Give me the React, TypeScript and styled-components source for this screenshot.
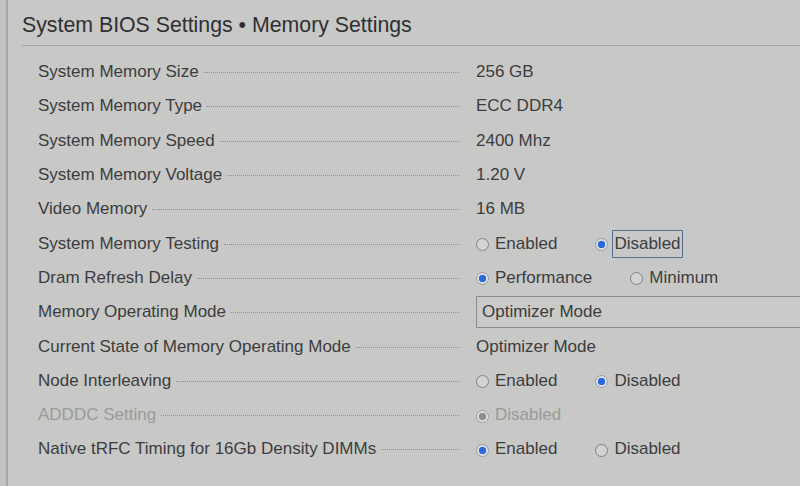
import React from "react";
import styled, { createGlobalStyle } from "styled-components";

const Global = createGlobalStyle`
  html, body { margin: 0; padding: 0; background: #c7c7c5; }
  body { font-family: "Liberation Sans", Arial, sans-serif; overflow: hidden; }
`;

const Screen = styled.div`
  width: 800px;
  height: 486px;
  display: flex;
  background: #c8c8c6;
  overflow: hidden;
`;

const Strip = styled.div`
  width: 6px;
  flex: none;
  background: #c2c2c0;
  border-right: 2px solid #a7a8a6;
`;

const Main = styled.div`
  flex: 1;
  display: flex;
  flex-direction: column;
  min-width: 0;
`;

const Title = styled.h1`
  margin: 0 0 0 14px;
  height: 46px;
  box-sizing: border-box;
  padding-top: 13px;
  font-size: 21.3px;
  font-weight: normal;
  color: #2f3033;
  border-bottom: 1px solid #a6a6a4;
`;

const List = styled.div`
  display: flex;
  flex-direction: column;
  padding: 9px 0 0 30px;
`;

const Row = styled.div<{ $disabled?: boolean }>`
  display: grid;
  grid-template-columns: 422px 1fr;
  column-gap: 16px;
  align-items: center;
  height: 34.3px;
  font-size: 17px;
  color: ${(p) => (p.$disabled ? "#9a9b9b" : "#3c3d3f")};
`;

const LabelCell = styled.div`
  display: flex;
  align-items: baseline;
  min-width: 0;
`;

const LabelText = styled.span`
  white-space: nowrap;
`;

const Leader = styled.span`
  flex: 1;
  margin-left: 5px;
  border-bottom: 1px dotted #8f908f;
  transform: translateY(-4px);
`;

const Value = styled.div`
  white-space: nowrap;
`;

const Options = styled.div`
  display: flex;
  gap: 36px;
  align-items: center;
`;

const Option = styled.span`
  display: inline-flex;
  align-items: center;
  gap: 4px;
`;

const Dot = styled.span<{ $on?: boolean; $dim?: boolean }>`
  width: 13px;
  height: 13px;
  box-sizing: border-box;
  border-radius: 50%;
  border: 1px solid ${(p) => (p.$on ? "#9aa0aa" : "#7e8288")};
  background: ${(p) =>
    p.$on
      ? `radial-gradient(circle, ${p.$dim ? "#8b8c8e" : "#2a6ad8"} 0 3.4px, #dcdde0 4px)`
      : "#d2d3d3"};
  margin-top: 2px;
  flex: none;
`;

const OptText = styled.span<{ $focus?: boolean }>`
  padding: ${(p) => (p.$focus ? "4px 1px" : "5px 2px")};
  border: ${(p) => (p.$focus ? "1px solid #58708f" : "0")};
  line-height: 18px;
`;

const Select = styled.div`
  height: 32px;
  box-sizing: border-box;
  border: 1px solid #8b8c8c;
  border-right: none;
  margin-right: -20px;
  padding-left: 5px;
  display: flex;
  align-items: center;
  background: #cacac8;
`;

type Opt = { label: string; on?: boolean; focus?: boolean };
type Item =
  | { label: string; kind: "text"; value: string; disabled?: boolean }
  | { label: string; kind: "radio"; options: Opt[]; disabled?: boolean }
  | { label: string; kind: "select"; value: string; disabled?: boolean };

const items: Item[] = [
  { label: "System Memory Size", kind: "text", value: "256 GB" },
  { label: "System Memory Type", kind: "text", value: "ECC DDR4" },
  { label: "System Memory Speed", kind: "text", value: "2400 Mhz" },
  { label: "System Memory Voltage", kind: "text", value: "1.20 V" },
  { label: "Video Memory", kind: "text", value: "16 MB" },
  {
    label: "System Memory Testing",
    kind: "radio",
    options: [{ label: "Enabled" }, { label: "Disabled", on: true, focus: true }],
  },
  {
    label: "Dram Refresh Delay",
    kind: "radio",
    options: [{ label: "Performance", on: true }, { label: "Minimum" }],
  },
  { label: "Memory Operating Mode", kind: "select", value: "Optimizer Mode" },
  { label: "Current State of Memory Operating Mode", kind: "text", value: "Optimizer Mode" },
  {
    label: "Node Interleaving",
    kind: "radio",
    options: [{ label: "Enabled" }, { label: "Disabled", on: true }],
  },
  {
    label: "ADDDC Setting",
    kind: "radio",
    disabled: true,
    options: [{ label: "Disabled", on: true }],
  },
  {
    label: "Native tRFC Timing for 16Gb Density DIMMs",
    kind: "radio",
    options: [{ label: "Enabled", on: true }, { label: "Disabled" }],
  },
];

function renderValue(it: Item) {
  if (it.kind === "text") return <Value>{it.value}</Value>;
  if (it.kind === "select") return <Select>{it.value}</Select>;
  return (
    <Options>
      {it.options.map((o) => (
        <Option key={o.label}>
          <Dot $on={o.on} $dim={it.disabled} />
          <OptText $focus={o.focus}>{o.label}</OptText>
        </Option>
      ))}
    </Options>
  );
}

export default function App() {
  return (
    <>
      <Global />
      <Screen>
        <Strip />
        <Main>
          <Title>System BIOS Settings • Memory Settings</Title>
          <List>
            {items.map((it) => (
              <Row key={it.label} $disabled={it.disabled}>
                <LabelCell>
                  <LabelText>{it.label}</LabelText>
                  <Leader />
                </LabelCell>
                {renderValue(it)}
              </Row>
            ))}
          </List>
        </Main>
      </Screen>
    </>
  );
}
